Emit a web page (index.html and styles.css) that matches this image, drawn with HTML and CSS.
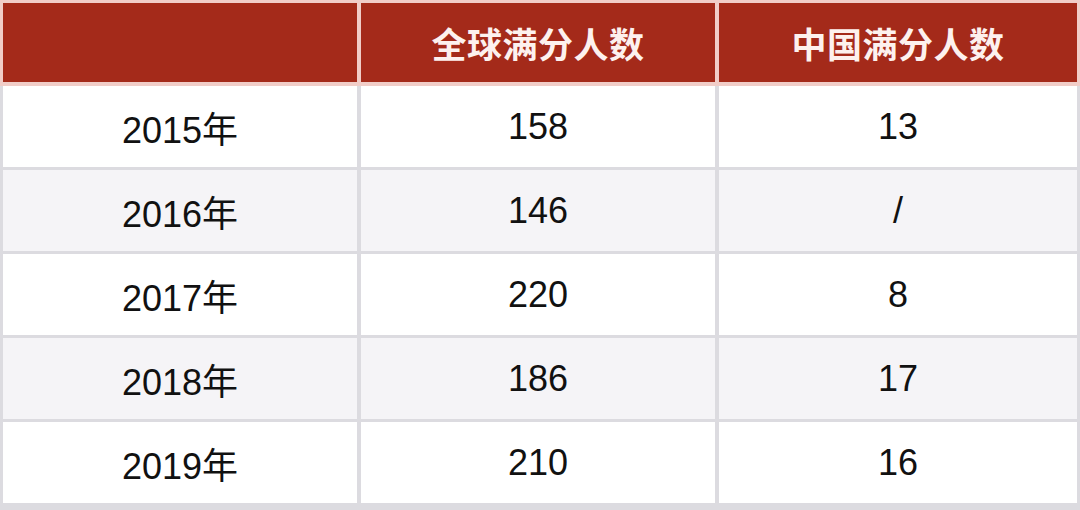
FILE: index.html
```html
<!DOCTYPE html>
<html lang="zh">
<head>
<meta charset="utf-8">
<link rel="stylesheet" href="styles.css">
</head>
<body>
<div class="table">
  <div class="head">
    <div class="hcell"></div>
    <div class="hcell">全球满分人数</div>
    <div class="hcell">中国满分人数</div>
  </div>
  <div class="body">
    <div class="row">
      <div class="cell">2015年</div><div class="cell">158</div><div class="cell">13</div>
    </div>
    <div class="row alt">
      <div class="cell">2016年</div><div class="cell">146</div><div class="cell">/</div>
    </div>
    <div class="row">
      <div class="cell">2017年</div><div class="cell">220</div><div class="cell">8</div>
    </div>
    <div class="row alt">
      <div class="cell">2018年</div><div class="cell">186</div><div class="cell">17</div>
    </div>
    <div class="row">
      <div class="cell">2019年</div><div class="cell">210</div><div class="cell">16</div>
    </div>
  </div>
</div>
</body>
</html>
```
FILE: styles.css
```css
html, body {
  margin: 0;
  padding: 0;
  width: 1080px;
  height: 510px;
  overflow: hidden;
  background: #dcdbe0;
}
.table {
  display: flex;
  flex-direction: column;
  width: 1080px;
  height: 510px;
}
.head {
  display: grid;
  grid-template-columns: 354px 354px 358px;
  column-gap: 4px;
  padding: 3px 3px 4px 3px;
  background: #f1cdc8;
}
.hcell {
  height: 79px;
  background: #a42a1a;
  color: #fdf1ee;
  font-family: "Noto Sans CJK SC", "Liberation Sans", sans-serif;
  font-weight: 700;
  font-size: 35px;
  display: flex;
  align-items: center;
  justify-content: center;
  letter-spacing: 0.5px;
}
.body {
  display: flex;
  flex-direction: column;
  gap: 3px;
  padding: 0 3px;
}
.row {
  display: grid;
  grid-template-columns: 354px 354px 358px;
  column-gap: 4px;
}
.cell {
  height: 81px;
  background: #ffffff;
  color: #111111;
  font-family: "Liberation Sans", "Noto Sans CJK SC", sans-serif;
  font-size: 36px;
  display: flex;
  align-items: center;
  justify-content: center;
}
.row.alt .cell {
  background: #f5f4f7;
}
```
